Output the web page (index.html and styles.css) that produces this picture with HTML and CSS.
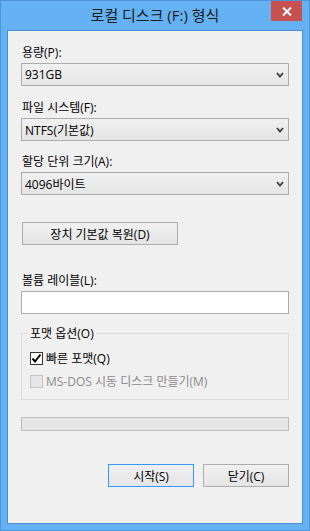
FILE: index.html
```html
<!DOCTYPE html>
<html lang="ko">
<head>
    <meta charset="UTF-8">
    <title>로컬 디스크 (F:) 형식</title>
    <link rel="stylesheet" href="styles.css">
</head>
<body>

    <div class="window">
        <div class="titlebar">
            <span></span>
            <div class="title">로컬 디스크 (F:) 형식</div>
            <div class="close">
                <svg width="10" height="9" viewBox="0 0 10 9"><path d="M1 0.5 L9 8.5 M9 0.5 L1 8.5" stroke="#fff" stroke-width="2"/></svg>
            </div>
        </div>

        <div class="client">
            <div class="label first">용량(P):</div>
            <div class="combo">
                <span>931GB</span>
                <svg width="8" height="6" viewBox="0 0 8 6"><path d="M1 1 L4 4.5 L7 1" fill="none" stroke="#3c3c3c" stroke-width="1.8"/></svg>
            </div>

            <div class="label gap14">파일 시스템(F):</div>
            <div class="combo">
                <span>NTFS(기본값)</span>
                <svg width="8" height="6" viewBox="0 0 8 6"><path d="M1 1 L4 4.5 L7 1" fill="none" stroke="#3c3c3c" stroke-width="1.8"/></svg>
            </div>

            <div class="label gap13">할당 단위 크기(A):</div>
            <div class="combo">
                <span>4096바이트</span>
                <svg width="8" height="6" viewBox="0 0 8 6"><path d="M1 1 L4 4.5 L7 1" fill="none" stroke="#3c3c3c" stroke-width="1.8"/></svg>
            </div>

            <div class="btn restore">장치 기본값 복원(D)</div>

            <div class="label gap28">볼륨 레이블(L):</div>
            <div class="textbox"></div>

            <fieldset class="group">
                <legend>포맷 옵션(O)</legend>
                <div class="check-row first-row">
                    <span class="check">
                        <svg width="11" height="11" viewBox="0 0 11 11"><path d="M1.5 5.5 L4 8.5 L9.5 1.5" fill="none" stroke="#000" stroke-width="2"/></svg>
                    </span>
                    빠른 포맷(Q)
                </div>
                <div class="check-row disabled">
                    <span class="check"></span>
                    MS-DOS 시동 디스크 만들기(M)
                </div>
            </fieldset>

            <div class="progress"></div>

            <div class="actions">
                <div class="btn default">시작(S)</div>
                <div class="btn">닫기(C)</div>
            </div>
        </div>
    </div>

</body>
</html>
```

FILE: styles.css
```css
html, body {
    margin: 0;
    padding: 0;
}

body {
    font-family: 'Open Sans', 'Noto Sans CJK KR', sans-serif;
    font-size: 12px;
    color: #000;
    background: #fff;
}

.window {
    width: 310px;
    height: 531px;
    box-sizing: border-box;
    background-color: #64b1f3;
    border: 1px solid #4d94d8;
    display: flex;
    flex-direction: column;
}

.titlebar {
    height: 29px;
    display: grid;
    grid-template-columns: 1fr auto 1fr;
}

.title {
    font-size: 15px;
    line-height: 29px;
    color: #1c1c1c;
    white-space: nowrap;
}

.close {
    justify-self: end;
    align-self: start;
    width: 31px;
    height: 20px;
    margin-right: 7px;
    background-color: #c75050;
    display: flex;
    align-items: center;
    justify-content: center;
}

.client {
    flex: 1;
    margin: 0 6px 6px;
    border: 1px solid #4a8ed2;
    background-color: #f0f0f0;
    padding: 14px 13px 0;
}

.label {
    line-height: 15px;
    margin-bottom: 3px;
    padding-left: 1px;
}

.gap14 {
    margin-top: 14px;
}

.gap13 {
    margin-top: 13px;
}

.gap28 {
    margin-top: 28px;
}

.combo {
    height: 23px;
    box-sizing: border-box;
    border: 1px solid #acacac;
    background: linear-gradient(#f0f0f0, #e5e5e5);
    display: flex;
    align-items: center;
    justify-content: space-between;
    padding: 0 4px 0 3px;
}

.combo svg {
    margin-top: 1px;
}

.btn {
    height: 23px;
    box-sizing: border-box;
    border: 1px solid #acacac;
    background: linear-gradient(#f0f0f0, #e5e5e5);
    display: flex;
    align-items: center;
    justify-content: center;
    width: 86px;
}

.btn.restore {
    width: 156px;
    margin: 27px 0 0 1px;
}

.btn.default {
    border-color: #3399ff;
}

.textbox {
    height: 23px;
    box-sizing: border-box;
    border: 1px solid #abadb3;
    background-color: #fff;
}

.group {
    margin: 12px 0 0;
    padding: 0 8px 10px;
    border: 1px solid #dcdcdc;
}

.group legend {
    padding: 0 2px;
    margin-left: -2px;
    line-height: 15px;
}

.check-row {
    display: flex;
    align-items: center;
    gap: 3px;
    line-height: 15px;
    margin-top: 8px;
}

.check-row.first-row {
    margin-top: 10px;
}

.check {
    width: 13px;
    height: 13px;
    box-sizing: border-box;
    border: 1px solid #333;
    background-color: #fff;
    display: flex;
    align-items: center;
    justify-content: center;
}

.check-row.disabled {
    color: #8a8a8a;
}

.check-row.disabled .check {
    border-color: #c4c4c4;
    background-color: #e6e6e6;
}

.progress {
    margin-top: 17px;
    height: 14px;
    box-sizing: border-box;
    border: 1px solid #bcbcbc;
    background-color: #e6e6e6;
}

.actions {
    margin-top: 33px;
    display: flex;
    justify-content: flex-end;
    gap: 9px;
}
```
